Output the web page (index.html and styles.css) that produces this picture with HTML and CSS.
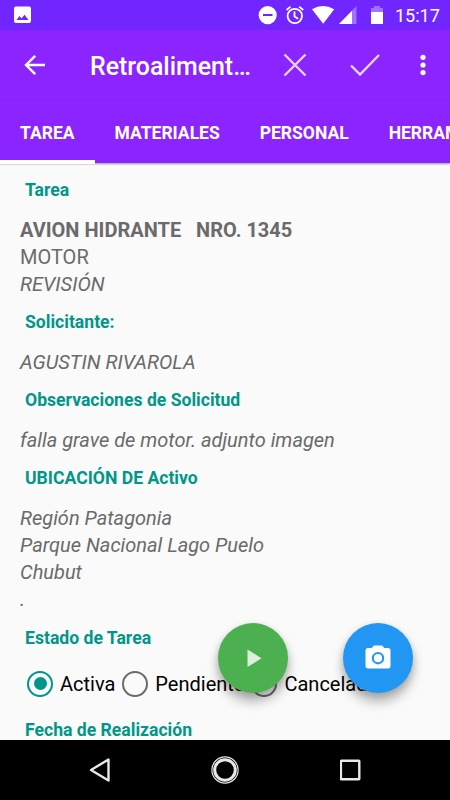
FILE: index.html
```html
<!DOCTYPE html>
<html lang="es">
<head>
<meta charset="utf-8">
<title>Retroalimentación</title>
<link rel="stylesheet" href="styles.css">
</head>
<body>
<div class="screen">
  <header class="status">
    <svg width="450" height="30" viewBox="0 0 450 30" fill="#fff">
      <path fill-rule="evenodd" d="M16 6.500h13a2 2 0 0 1 2 2v12.500a2 2 0 0 1-2 2H16a2 2 0 0 1-2-2V8.500a2 2 0 0 1 2-2zM16.500 20H28.500l-4-5.200-3 3.800-2.100-2.500z"/>
      <path fill-rule="evenodd" d="M267.700 6a9.100 9.100 0 1 0 0 18.200a9.100 9.100 0 0 0 0-18.200zM263 14h9.500v2H263z"/>
      <g fill="none" stroke="#fff" stroke-width="1.800"><circle cx="294.800" cy="16" r="7.200"/><path d="M294.500 11.500v5l3.700 2.300M286.500 10l4-3.400M303.200 10l-4-3.400"/></g>
      <path d="M312 9.300q11-6.500 22.200 0L323.200 23.800z"/>
      <path d="M356.500 6v18h-17.500z" opacity=".35"/>
      <path d="M352 10.800V24h-13z"/>
      <path d="M374 6h6v2h3v4h-12V8h3z" opacity=".35"/>
      <path d="M371 12h12v12h-12z"/>
    </svg>
    <span class="clock">15:17</span>
  </header>
  <div class="appbar">
    <svg class="back" width="22" height="22" viewBox="0 0 22 22"><path d="M21 11H2.500M11.200 1.800L2 11l9.200 9.200"/></svg>
    <h1>Retroaliment…</h1>
    <svg class="close" width="24" height="24" viewBox="0 0 24 24"><path d="M1.500 1.500l21 21M22.500 1.500l-21 21"/></svg>
    <svg class="check" width="30" height="24" viewBox="0 0 30 24"><path d="M1 12.500l9 9L29 2"/></svg>
    <svg class="more" width="6" height="22" viewBox="0 0 6 22"><circle cx="3" cy="3.300" r="2.600"/><circle cx="3" cy="11" r="2.600"/><circle cx="3" cy="18.600" r="2.600"/></svg>
  </div>
  <nav class="tabs">
    <span class="tab active">TAREA</span><span class="tab">MATERIALES</span><span class="tab">PERSONAL</span><span class="tab">HERRAMIENTAS</span>
  </nav>
  <main>
    <h2>Tarea</h2>
    <div class="body"><p class="strong">AVION HIDRANTE &nbsp; NRO. 1345</p><p class="plain">MOTOR</p><p>REVISIÓN</p></div>
    <h2>Solicitante:</h2>
    <div class="body"><p>AGUSTIN RIVAROLA</p></div>
    <h2>Observaciones de Solicitud</h2>
    <div class="body"><p>falla grave de motor. adjunto imagen</p></div>
    <h2>UBICACIÓN DE Activo</h2>
    <div class="body"><p>Región Patagonia</p><p>Parque Nacional Lago Puelo</p><p>Chubut</p><p>.</p></div>
    <h2>Estado de Tarea</h2>
    <div class="radios">
      <span class="radio on"><i></i>Activa</span>
      <span class="radio"><i></i>Pendiente</span>
      <span class="radio"><i></i>Cancelada</span>
    </div>
    <h2>Fecha de Realización</h2>
  </main>
  <footer>
    <svg width="22" height="26" viewBox="0 0 22 26"><path d="M20.500 2.500v21L3 13z"/></svg>
    <svg width="28" height="28" viewBox="0 0 28 28"><circle cx="14" cy="14" r="13.100" stroke-width="1.200"/><circle cx="14" cy="14" r="10.300" stroke-width="3"/></svg>
    <svg width="22" height="22" viewBox="0 0 22 22"><rect x=".9" y="1.800" width="18.400" height="18.400" rx=".5"/></svg>
  </footer>
  <button class="fab play"><svg width="70" height="70" viewBox="0 0 70 70"><path d="M29.500 26.500v17.500l14-8.800z" fill="#dbefdc"/></svg></button>
  <button class="fab camera"><svg width="70" height="70" viewBox="0 0 70 70" fill="#fff"><path fill-rule="evenodd" d="M31 22.500h8l2.300 2.500H45a2.500 2.500 0 0 1 2.500 2.500v15.500a2.500 2.500 0 0 1-2.500 2.500H25a2.500 2.500 0 0 1-2.500-2.500V27.500A2.500 2.500 0 0 1 25 25h3.700zM35 29a6.200 6.200 0 1 0 0 12.400a6.200 6.200 0 0 0 0-12.400z"/><circle cx="35" cy="35.200" r="4.100"/></svg></button>
</div>
</body>
</html>
```
FILE: styles.css
```css
* { box-sizing: border-box; margin: 0; padding: 0; }
body { font-family: Roboto, sans-serif; background: #fafafa; }
.screen { position: relative; width: 450px; height: 800px; overflow: hidden; display: flex; flex-direction: column; }
svg { display: block; flex: none; }
.status { position: relative; flex: none; height: 30px; background: #7226ff; }
.clock { position: absolute; left: 395px; top: 4px; font-size: 18px; line-height: 24px; font-weight: 400; color: #fff; }
.appbar { flex: none; height: 70px; padding-left: 24px; display: flex; align-items: center; background: #8b24ff; fill: none; stroke: #fff; stroke-width: 2.400; }
.appbar h1 { width: 166px; margin-left: 44px; padding-top: 3px; font-size: 24.900px; line-height: 30px; font-weight: 500; color: #fff; white-space: nowrap; stroke: none; }
.close { margin-left: 27px; }
.check { margin-left: 43px; }
.close, .check { opacity: .8; }
.more { margin-left: 39.500px; fill: #fff; stroke: none; }
.tabs { position: relative; z-index: 1; flex: none; height: 63px; display: flex; background: #8b24ff; box-shadow: 0 1px 2px rgba(0,0,0,.4); }
.tab { flex: none; padding: 0 20px; height: 64px; line-height: 66px; font-size: 17.500px; font-weight: 700; color: #fff; }
.active { border-bottom: 4px solid #fff; }
main { flex: 1; min-height: 0; overflow: hidden; padding: 13.600px 20px 0; }
h2 { height: 26px; padding-left: 5px; line-height: 26px; font-size: 17.600px; font-weight: 700; color: #009688; }
.body { margin: 14px 0 11.300px; }
.body p { font-size: 20px; line-height: 27px; color: #6a6a6a; font-style: italic; white-space: nowrap; }
.body .strong { font-weight: 700; font-style: normal; }
.body .plain { font-style: normal; }
.radios { height: 66px; padding-left: 7px; display: flex; align-items: center; gap: 7px; }
.radio { display: flex; align-items: center; gap: 7px; font-size: 20px; color: #000; flex: none; }
.radio i { width: 26px; height: 26px; border: 2.500px solid #6b6b6b; border-radius: 50%; display: grid; place-items: center; }
.on i { border-color: #009688; }
.on i::after { content: ""; width: 13px; height: 13px; border-radius: 50%; background: #009688; }
footer { flex: none; height: 60px; padding: 0 88px; display: flex; align-items: center; justify-content: space-between; background: #000; fill: none; stroke: #e8e8e8; stroke-width: 2.400; stroke-linejoin: round; }
.fab { position: absolute; z-index: 2; top: 622.500px; width: 70px; height: 70px; border: 0; border-radius: 50%; box-shadow: 0 9px 12px rgba(0,0,0,.28), 0 2px 7px rgba(0,0,0,.14); }
.play { left: 217.500px; background: #4caf50; }
.camera { left: 342.500px; background: #2196f3; }
```
